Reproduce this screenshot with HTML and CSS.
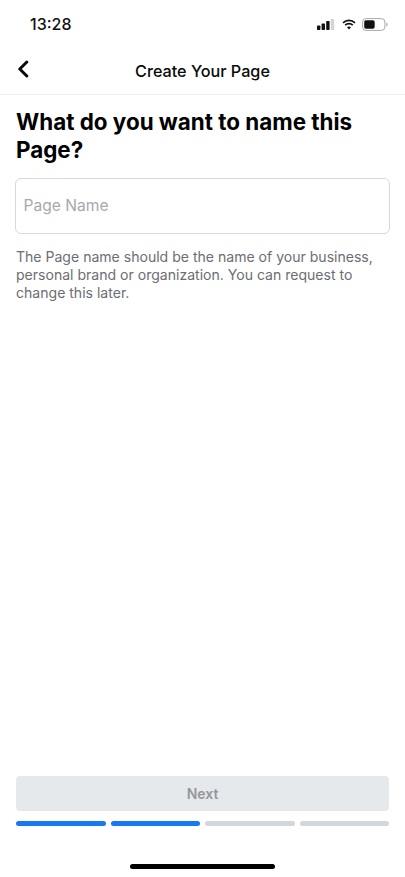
FILE: index.html
```html
<!DOCTYPE html>
<html lang="en">
<head>
<meta charset="utf-8">
<title>Create Your Page</title>
<link rel="stylesheet" href="styles.css">
</head>
<body>
<div class="screen">
  <div class="status">
    <span class="time">13:28</span>
    <div class="status-icons">
      <svg class="signal" width="18" height="11" viewBox="0 0 18 11"><rect x="0" y="6.500" width="3.400" height="4.500" rx=".7" fill="#111"/><rect x="4.600" y="4.500" width="3.400" height="6.500" rx=".7" fill="#111"/><rect x="9.200" y="2" width="3.400" height="9" rx=".7" fill="#111"/><rect x="13.800" y="0" width="3.400" height="11" rx=".7" fill="#d4d4d4"/></svg>
      <svg class="wifi" width="14" height="11" viewBox="0 0 14 11"><path d="M1 3.800a8.600 8.600 0 0 1 12 0M3.200 6.100a5.400 5.400 0 0 1 7.600 0" fill="none" stroke="#111" stroke-width="1.700"/><path d="M7 10.600 5 8.300a3 3 0 0 1 4 0z" fill="#111"/></svg>
      <svg class="battery" width="26" height="13" viewBox="0 0 26 13"><rect x=".6" y=".6" width="22.300" height="11.800" rx="3.400" fill="none" stroke="#a9a9a9" stroke-width="1"/><rect x="2.200" y="2.200" width="10.500" height="8.600" rx="1.800" fill="#111"/><path d="M24.300 4.500c.9.300 1.300 1.100 1.300 2s-.4 1.700-1.300 2z" fill="#a9a9a9"/></svg>
    </div>
  </div>
  <header class="nav">
    <svg class="back" width="12" height="18" viewBox="0 0 12 18"><path d="M9.800 2 2.800 9l7 7" fill="none" stroke="#0a0a0a" stroke-width="3" stroke-linecap="round" stroke-linejoin="round"/></svg>
    <h1 class="nav-title">Create Your Page</h1>
  </header>
  <main class="content">
    <h2 class="heading">What do you want to name this Page?</h2>
    <div class="field"><span class="placeholder">Page Name</span></div>
    <p class="help">The Page name should be the name of your business, personal brand or organization. You can request to change this later.</p>
  </main>
  <footer class="footer">
    <button class="next" type="button">Next</button>
    <div class="progress">
      <span class="seg on"></span>
      <span class="seg on"></span>
      <span class="seg"></span>
      <span class="seg"></span>
    </div>
    <div class="home-wrap"><span class="home"></span></div>
  </footer>
</div>
</body>
</html>
```
FILE: styles.css
```css
* { box-sizing: border-box; }
html, body { margin: 0; padding: 0; background: #fff; }
body { font-family: Inter, "Liberation Sans", sans-serif; color: #0a0a0a; }
.screen { width: 405px; height: 877px; display: flex; flex-direction: column; overflow: hidden; }
.status { height: 48px; flex: none; display: flex; align-items: center; justify-content: space-between; padding: 0 17px 0 30px; }
.time { font-size: 16px; font-weight: 500; color: #111; }
.status-icons { display: flex; align-items: center; gap: 5px; }
.wifi { margin-left: 2px; margin-right: 1px; }
.nav { height: 47px; flex: none; display: flex; align-items: center; justify-content: center; position: relative; border-bottom: 1px solid #eeeff1; }
.back { position: absolute; left: 17px; top: 12px; }
.nav-title { margin: 0; font-size: 16.200px; font-weight: 500; color: #0a0a0a; }
.content { flex: 1; padding: 13px 15px 0 16px; }
.heading { margin: 0; font-size: 22.400px; line-height: 28px; font-weight: 700; color: #000; }
.field { margin: 14px 0 0 -1px; height: 56px; border: 1.500px solid #d6d8db; border-radius: 6px; display: flex; align-items: center; padding: 0 7.500px 2px; }
.placeholder { font-size: 15.600px; color: #a6a9ad; }
.help { margin: 14px 0 0; font-size: 14.050px; line-height: 18px; color: #6b6e73; }
.footer { flex: none; padding: 0 16px; }
.next { display: block; width: 100%; height: 35px; border: 0; border-radius: 4px; background: #e6e9ec; color: #94979b; font: 600 14px Inter, "Liberation Sans", sans-serif; }
.progress { display: flex; gap: 5px; margin-top: 10px; }
.seg { flex: 1; height: 5px; border-radius: 3px; background: #d3d6da; }
.seg.on { background: #1877f2; }
.home-wrap { display: flex; justify-content: center; padding: 38px 0 8px; }
.home { width: 145px; height: 5px; border-radius: 3px; background: #000; }
```
